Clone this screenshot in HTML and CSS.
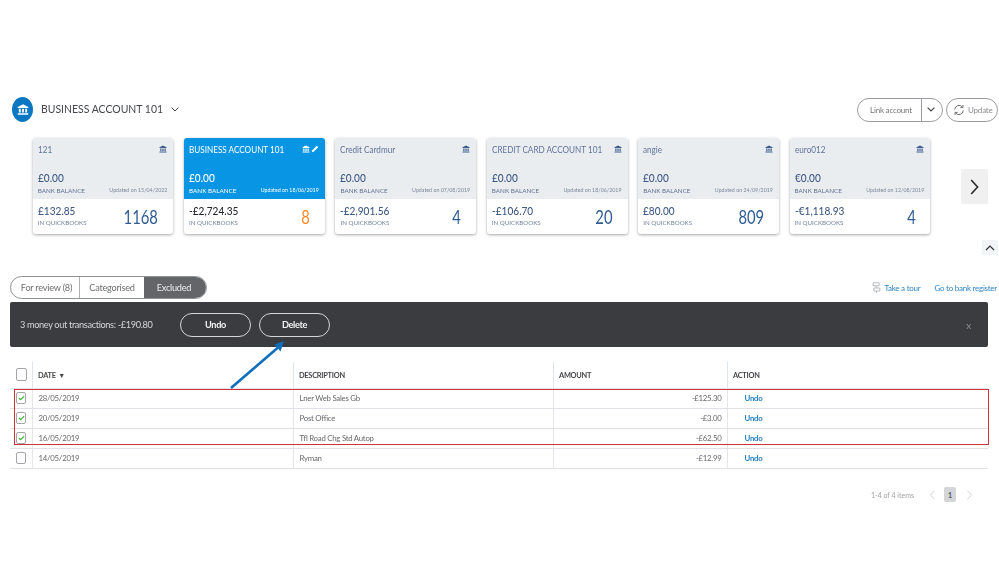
FILE: index.html
```html
<!DOCTYPE html>
<html lang="en">
<head>
<meta charset="utf-8">
<title>Banking</title>
<link rel="stylesheet" href="styles.css">
</head>
<body>
<svg class="defs" width="0" height="0" aria-hidden="true">
  <symbol id="bank" viewBox="0 0 16 16">
    <path d="M8 1 15 4.6V6H1V4.6Z" fill="currentColor"/>
    <path d="M2.500 7h2.500v5H2.500zM6.800 7h2.400v5H6.800zM11 7h2.500v5H11z" fill="currentColor"/>
    <path d="M1 13h14v2H1z" fill="currentColor"/>
  </symbol>
</svg>
<main class="page">
  <header class="account-head">
    <div class="account-badge"><svg class="badge-icon"><use href="#bank"/></svg></div>
    <h1 class="account-name">BUSINESS ACCOUNT 101</h1>
    <svg class="account-caret" viewBox="0 0 8 5"><path d="M.6.6 4 4 7.4.6" fill="none" stroke="currentColor" stroke-width="1"/></svg>
    <div class="head-actions">
      <div class="link-btn"><span class="link-label">Link account</span><span class="link-caret"><svg viewBox="0 0 8 5"><path d="M.6.6 4 4 7.4.6" fill="none" stroke="currentColor" stroke-width="1.2"/></svg></span></div>
      <div class="update-btn"><svg viewBox="0 0 14 14"><path d="M2 6.500A5 5 0 0 1 11 3.600M12 7.500A5 5 0 0 1 3 10.400" fill="none" stroke="currentColor" stroke-width="1.1"/><path d="M11.600 1.200v3h-3M2.400 12.800v-3h3" fill="none" stroke="currentColor" stroke-width="1.1"/></svg><span>Update</span></div>
    </div>
  </header>

  <section class="cards-row">
    <article class="card">
      <div class="card-top">
        <div class="card-title"><span class="card-name">121</span><svg class="card-bank"><use href="#bank"/></svg></div>
        <div class="card-amount">£0.00</div>
        <div class="card-meta"><span>BANK BALANCE</span><span class="card-updated">Updated on 15/04/2022</span></div>
      </div>
      <div class="card-bottom">
        <div class="card-book"><div class="card-amount">£132.85</div><div class="card-label">IN QUICKBOOKS</div></div>
        <div class="card-count">1168</div>
      </div>
    </article>
    <article class="card card-active">
      <div class="card-top">
        <div class="card-title"><span class="card-name">BUSINESS ACCOUNT 101</span><svg class="card-bank"><use href="#bank"/></svg><svg class="card-pencil" viewBox="0 0 10 10"><path d="M1 9l.6-2.400L7.200 1l1.800 1.800L3.400 8.400Z" fill="currentColor"/></svg></div>
        <div class="card-amount">£0.00</div>
        <div class="card-meta"><span>BANK BALANCE</span><span class="card-updated">Updated on 18/06/2019</span></div>
      </div>
      <div class="card-bottom">
        <div class="card-book"><div class="card-amount">-£2,724.35</div><div class="card-label">IN QUICKBOOKS</div></div>
        <div class="card-count">8</div>
      </div>
    </article>
    <article class="card">
      <div class="card-top">
        <div class="card-title"><span class="card-name">Credit Cardmur</span><svg class="card-bank"><use href="#bank"/></svg></div>
        <div class="card-amount">£0.00</div>
        <div class="card-meta"><span>BANK BALANCE</span><span class="card-updated">Updated on 07/08/2019</span></div>
      </div>
      <div class="card-bottom">
        <div class="card-book"><div class="card-amount">-£2,901.56</div><div class="card-label">IN QUICKBOOKS</div></div>
        <div class="card-count">4</div>
      </div>
    </article>
    <article class="card">
      <div class="card-top">
        <div class="card-title"><span class="card-name">CREDIT CARD ACCOUNT 101</span><svg class="card-bank"><use href="#bank"/></svg></div>
        <div class="card-amount">£0.00</div>
        <div class="card-meta"><span>BANK BALANCE</span><span class="card-updated">Updated on 18/06/2019</span></div>
      </div>
      <div class="card-bottom">
        <div class="card-book"><div class="card-amount">-£106.70</div><div class="card-label">IN QUICKBOOKS</div></div>
        <div class="card-count">20</div>
      </div>
    </article>
    <article class="card">
      <div class="card-top">
        <div class="card-title"><span class="card-name">angie</span><svg class="card-bank"><use href="#bank"/></svg></div>
        <div class="card-amount">£0.00</div>
        <div class="card-meta"><span>BANK BALANCE</span><span class="card-updated">Updated on 24/09/2019</span></div>
      </div>
      <div class="card-bottom">
        <div class="card-book"><div class="card-amount">£80.00</div><div class="card-label">IN QUICKBOOKS</div></div>
        <div class="card-count">809</div>
      </div>
    </article>
    <article class="card">
      <div class="card-top">
        <div class="card-title"><span class="card-name">euro012</span><svg class="card-bank"><use href="#bank"/></svg></div>
        <div class="card-amount">€0.00</div>
        <div class="card-meta"><span>BANK BALANCE</span><span class="card-updated">Updated on 12/08/2019</span></div>
      </div>
      <div class="card-bottom">
        <div class="card-book"><div class="card-amount">-€1,118.93</div><div class="card-label">IN QUICKBOOKS</div></div>
        <div class="card-count">4</div>
      </div>
    </article>
    <div class="next-btn"><svg viewBox="0 0 9 16"><path d="M1.200 1 7.600 8 1.200 15" fill="none" stroke="currentColor" stroke-width="1.6"/></svg></div>
  </section>

  <div class="collapse-row"><div class="collapse-btn"><svg viewBox="0 0 10 6"><path d="M1 5 5 1l4 4" fill="none" stroke="currentColor" stroke-width="1.2"/></svg></div></div>

  <div class="tabs-row">
    <div class="tabs">
      <span class="tab tab-review">For review (8)</span>
      <span class="tab tab-cat">Categorised</span>
      <span class="tab tab-excluded">Excluded</span>
    </div>
    <div class="tab-links">
      <svg class="tour-icon" viewBox="0 0 12 16"><path d="M1.500 1h8v4h-8zM2.500 8h8v4h-8zM5.500 5v3M6 12v3" fill="none" stroke="currentColor" stroke-width=".9"/></svg>
      <span class="tour-link">Take a tour</span>
      <span class="register-link">Go to bank register</span>
    </div>
  </div>

  <div class="batch-bar">
    <span class="batch-text">3 money out transactions: -£190.80</span>
    <span class="batch-btn">Undo</span>
    <span class="batch-btn">Delete</span>
    <span class="batch-close">x</span>
  </div>

  <table class="tx-table">
    <colgroup><col class="col-check"><col class="col-date"><col class="col-desc"><col class="col-amount"><col class="col-action"></colgroup>
    <thead>
      <tr>
        <th><span class="check check-head"></span></th>
        <th>DATE <span class="sort">▼</span></th>
        <th>DESCRIPTION</th>
        <th>AMOUNT</th>
        <th>ACTION</th>
      </tr>
    </thead>
    <tbody>
      <tr><td><span class="check"><svg viewBox="0 0 8 6"><path d="M1 3l2 2 4-4" fill="none" stroke="currentColor" stroke-width="1.3"/></svg></span></td><td>28/05/2019</td><td>Lner Web Sales Gb</td><td class="amount">-£125.30</td><td class="action">Undo</td></tr>
      <tr><td><span class="check"><svg viewBox="0 0 8 6"><path d="M1 3l2 2 4-4" fill="none" stroke="currentColor" stroke-width="1.3"/></svg></span></td><td>20/05/2019</td><td>Post Office</td><td class="amount">-£3.00</td><td class="action">Undo</td></tr>
      <tr><td><span class="check"><svg viewBox="0 0 8 6"><path d="M1 3l2 2 4-4" fill="none" stroke="currentColor" stroke-width="1.3"/></svg></span></td><td>16/05/2019</td><td>Tfl Road Chg Std Autop</td><td class="amount">-£62.50</td><td class="action">Undo</td></tr>
      <tr><td><span class="check"></span></td><td>14/05/2019</td><td>Ryman</td><td class="amount">-£12.99</td><td class="action">Undo</td></tr>
    </tbody>
  </table>

  <nav class="pager">
    <span class="pager-count">1-4 of 4 items</span>
    <svg class="pager-arrow" viewBox="0 0 7 12"><path d="M6 1 1 6l5 5" fill="none" stroke="currentColor" stroke-width="1"/></svg>
    <span class="pager-page">1</span>
    <svg class="pager-arrow" viewBox="0 0 7 12"><path d="M1 1l5 5-5 5" fill="none" stroke="currentColor" stroke-width="1"/></svg>
  </nav>

  <div class="red-box"></div>
  <svg class="arrow" viewBox="0 0 999 562"><path d="M231 388 278 347.500" fill="none" stroke="#0f6fbd" stroke-width="2.600"/><path d="M284 341 274.500 344.500 280.500 351.500Z" fill="#0f6fbd"/></svg>
</main>
</body>
</html>
```
FILE: styles.css
```css
* { box-sizing: border-box; }
html, body { margin: 0; padding: 0; background: #fff; }
body { font-family: Lato, "Liberation Sans", sans-serif; color: #4b4d52; }
.defs { position: absolute; }
.page { position: relative; width: 999px; height: 562px; padding-top: 97px; overflow: hidden; filter: blur(.3px); }

.account-head { display: flex; align-items: center; height: 25px; padding: 0 1px 0 12px; }
.account-badge { width: 21px; height: 25px; border-radius: 50%; background: #0a77c2; display: flex; align-items: center; justify-content: center; color: #fff; }
.badge-icon { width: 12px; height: 13px; }
.account-name { width: 122px; margin: 0 0 0 8px; padding-bottom: 2px; font-size: 12.3px; font-weight: 400; white-space: nowrap; color: #45474c; transform: scaleX(.85); transform-origin: left center; }
.account-caret { width: 8px; height: 5px; margin-left: 8px; color: #45474c; }
.head-actions { margin-left: auto; display: flex; gap: 3px; }
.link-btn { width: 86px; height: 24px; border: 1px solid #9a9c9f; border-radius: 12px; display: flex; font-size: 8px; letter-spacing: -.2px; color: #777; }
.link-label { flex: 1; display: flex; align-items: center; justify-content: center; padding-left: 3px; }
.link-caret { width: 21px; border-left: 1px solid #9a9c9f; display: flex; align-items: center; justify-content: center; padding-right: 2px; color: #444; }
.link-caret svg { width: 8px; height: 5px; }
.update-btn { width: 52px; height: 24px; border: 1px solid #9a9c9f; border-radius: 12px; display: flex; align-items: center; gap: 3px; padding-left: 6px; font-size: 8px; letter-spacing: -.2px; color: #8a8c8f; }
.update-btn svg { width: 12px; height: 12px; color: #666; }

.cards-row { position: relative; display: flex; gap: 10.7px; margin: 16px 0 0 32.7px; }
.card { width: 140.7px; height: 96px; border-radius: 3px; overflow: hidden; background: #fff; box-shadow: 0 1px 3px rgba(0,0,0,.35); color: #3f5f8e; flex: none; }
.card-top { height: 61px; padding: 6px 6px 0 5px; background: #eaedf0; }
.card-title { display: flex; align-items: flex-start; height: 14px; font-size: 9.6px; line-height: 12px; color: #60749a; }
.card-name { flex: 1; min-width: 0; white-space: nowrap; transform: scaleX(.85); transform-origin: left center; }
.card-bank { width: 8px; height: 8px; margin-top: 1px; color: #3f5f8e; flex: none; }
.card-amount { font-size: 12px; line-height: 14px; font-weight: 500; white-space: nowrap; color: #3f5a85; transform: scaleX(.84); transform-origin: left center; }
.card-top .card-amount { margin-top: 13px; }
.card-meta { display: flex; justify-content: space-between; align-items: center; margin-top: 1px; font-size: 6.3px; line-height: 9px; color: #5f7290; }
.card-updated { font-size: 5.3px; color: #7d8a9c; }
.card-bottom { height: 35px; padding: 0 15px 0 5px; display: flex; justify-content: space-between; align-items: center; }
.card-book { margin-bottom: 2px; }
.card-label { font-size: 6.2px; line-height: 9px; color: #75849b; }
.card-count { font-size: 18.5px; line-height: 22px; color: #2f5c94; transform: scaleX(.8); transform-origin: right center; }
.card-active .card-top { background: #0895e3; }
.card-active .card-title, .card-active .card-amount, .card-active .card-updated, .card-active .card-meta, .card-active .card-bank { color: #fff; }
.card-active .card-bottom .card-amount { color: #26282c; }
.card-active .card-count { color: #f88a2e; }
.card-pencil { width: 8px; height: 8px; margin: 1px 0 0 1px; color: #fff; flex: none; }
.next-btn { flex: none; width: 27px; height: 35px; margin: 31px 0 0 20px; background: #f0f0f0; display: flex; align-items: center; justify-content: center; color: #2b2b2b; }
.next-btn svg { width: 9px; height: 16px; }

.collapse-row { display: flex; justify-content: flex-end; padding: 6px 1px 0 0; }
.collapse-btn { width: 16px; height: 15px; background: #f2f5f8; display: flex; align-items: center; justify-content: center; color: #333; }
.collapse-btn svg { width: 10px; height: 6px; }

.tabs-row { display: flex; align-items: center; justify-content: space-between; margin: 21px 0 0 10px; height: 23px; }
.tabs { display: flex; width: 197px; height: 23px; border: 1px solid #8f9194; border-radius: 12px; overflow: hidden; font-size: 9.2px; letter-spacing: -.25px; color: #6d6f72; }
.tab { display: flex; align-items: center; justify-content: center; padding-bottom: 1px; }
.tab-review { width: 69px; border-right: 1px solid #aeb0b2; padding-left: 3px; }
.tab-cat { width: 64px; }
.tab-excluded { flex: 1; background: #636569; color: #eceded; padding-right: 2px; }
.tab-links { display: flex; align-items: center; font-size: 8px; letter-spacing: -.25px; color: #2f86c6; padding-top: 1px; }
.tour-icon { width: 9px; height: 14px; margin-right: 3px; color: #9a9c9f; }
.register-link { margin-left: 14px; margin-right: 2px; white-space: nowrap; }

.batch-bar { display: flex; align-items: center; gap: 8px; width: 978px; height: 45px; margin: 3px 0 0 10px; padding: 0 17px 0 10px; background: #3b3c3f; border-radius: 2px; color: #d5d6d7; font-size: 9.2px; letter-spacing: -.35px; }
.batch-text { width: 152px; white-space: nowrap; }
.batch-btn { width: 71px; height: 24px; border: 1px solid #d5d6d7; border-radius: 12px; display: flex; align-items: center; justify-content: center; font-weight: 700; font-size: 9.2px; color: #f2f2f2; }
.batch-close { margin-left: auto; color: #8e8f91; font-size: 10px; }

.tx-table { width: 978px; margin: 15px 0 0 10px; border-collapse: collapse; table-layout: fixed; font-size: 7.8px; letter-spacing: -.25px; color: #66686b; }
.col-check { width: 22px; }
.col-date { width: 261px; }
.col-desc { width: 260px; }
.col-amount { width: 174px; }
.col-action { width: 261px; }
.tx-table th { height: 26px; padding: 2px 0 0 5.5px; text-align: left; font-size: 7.4px; font-weight: 700; color: #45474a; border-left: 1px solid #dfe5ee; border-bottom: 1px solid #e4e6e9; }
.tx-table td { height: 20px; padding: 0 0 0 6px; border-left: 1px solid #e4e6ea; border-bottom: 1.5px solid #dfe1e6; }
.tx-table th:first-child, .tx-table td:first-child { padding: 0 0 0 6px; border-left: 0; vertical-align: middle; }
.sort { font-size: 7px; margin-left: 1px; }
.check { display: flex; align-items: center; justify-content: center; width: 10px; height: 12px; border: 1px solid #a4a6a9; border-radius: 2px; background: #fff; color: #45b53a; }
.check-head { width: 11px; height: 13px; }
.check svg { width: 7px; height: 6px; }
.amount { text-align: right; padding-right: 5px !important; }
.action { padding-left: 17px !important; color: #2580c3; font-weight: 700; }

.pager { display: flex; align-items: center; justify-content: flex-end; margin-top: 17px; height: 18px; padding-right: 26px; font-size: 7px; color: #a0a2a5; }
.pager-count { margin-right: 15px; }
.pager-arrow { width: 7px; height: 10px; color: #c4c6c8; }
.pager-page { width: 12px; height: 15px; margin: 0 10px 0 8px; background: #d4d5d7; border-radius: 2px; display: flex; align-items: center; justify-content: center; color: #55575a; font-weight: 700; }

.red-box { position: absolute; left: 14px; top: 389px; width: 975px; height: 56px; border: 1px solid #d03037; pointer-events: none; }
.arrow { position: absolute; left: 0; top: 0; width: 999px; height: 562px; pointer-events: none; }
```
